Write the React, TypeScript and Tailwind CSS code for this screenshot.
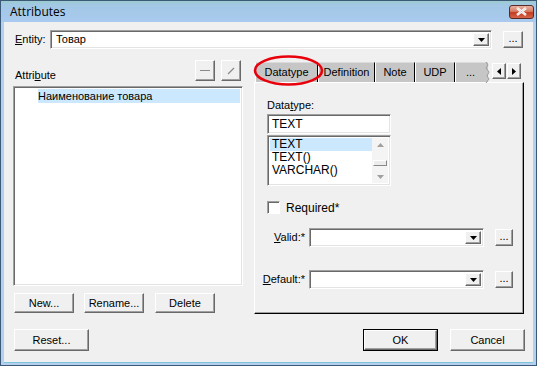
import type { ReactNode } from "react";

const raised =
  "bg-[#f0f0f0] border border-t-white border-l-white border-r-[#696969] border-b-[#696969] shadow-[inset_-1px_-1px_0_#a0a0a0]";
const sunken =
  "bg-white border border-t-[#a0a0a0] border-l-[#a0a0a0] border-r-white border-b-white shadow-[inset_1px_1px_0_#696969,inset_-1px_-1px_0_#e3e3e3]";

function Btn({ children, className = "", def = false }: { children?: ReactNode; className?: string; def?: boolean }) {
  if (def) {
    return (
      <div className={`border border-black ${className}`}>
        <div className={`${raised} w-full h-full flex items-center justify-center`}>{children}</div>
      </div>
    );
  }
  return <div className={`${raised} flex items-center justify-center ${className}`}>{children}</div>;
}

function DownArrow() {
  return (
    <svg width="7" height="4" viewBox="0 0 7 4">
      <path d="M0 0h7L3.5 4z" fill="#000" />
    </svg>
  );
}

function Combo({ className = "", text = "" }: { className?: string; text?: string }) {
  return (
    <div className={`${sunken} flex items-stretch p-[2px] ${className}`}>
      <div className="flex-1 flex items-center pl-[3px]">{text}</div>
      <div className={`${raised} w-[16px] flex items-center justify-center`}>
        <DownArrow />
      </div>
    </div>
  );
}

function Tab({ label, w }: { label: string; w: string }) {
  return (
    <div
      className={`${w} h-full bg-[#c6c6c6] border-l border-l-white border-r border-r-black border-t border-t-[#dcdcdc] flex items-center justify-center`}
    >
      {label}
    </div>
  );
}

export default function App() {
  return (
    <div className="relative w-[537px] h-[366px] border border-[#3c5a78] bg-[#b4d0ee] flex flex-col font-['Liberation_Sans',Arial,sans-serif] text-[11px] text-black overflow-hidden">
      {/* Title bar */}
      <div className="h-[21px] flex items-center justify-between bg-[linear-gradient(to_bottom,#9ccbcf_0px,#a2c8e6_4px,#a9caee_21px)] pl-[9px] pr-[2px]">
        <span className="text-[12px] font-['Open_Sans',Arial,sans-serif] text-black">Attributes</span>
        <div className="w-[25px] h-[14px] rounded-[3px] border border-[#5a2a24] bg-[linear-gradient(to_bottom,#e8b0a2,#d77a62_45%,#c23c22_55%,#d5644a)] flex items-center justify-center">
          <svg width="11" height="9" viewBox="0 0 11 9">
            <path d="M1 1l9 7M10 1L1 8" stroke="#fff" strokeWidth="2.4" />
            <path d="M1 1l9 7M10 1L1 8" stroke="#6a3a30" strokeWidth="0.5" strokeOpacity="0.4" fill="none" />
          </svg>
        </div>
      </div>

      {/* Body */}
      <div className="mx-[3px] h-[340px] bg-[#f0f0f0] flex flex-col pl-[9px]">
        {/* Entity row */}
        <div className="mt-[8px] h-[19px] flex items-center">
          <span className="w-[37px] pl-[2px]">
            <u>E</u>ntity:
          </span>
          <Combo className="w-[442px] h-[19px]" text="Товар" />
          <Btn className="ml-[11px] w-[20px] h-[17px] pb-[3px]">...</Btn>
        </div>

        {/* Main */}
        <div className="mt-[11px] flex h-[254px]">
          {/* Left column */}
          <div className="w-[230px] flex flex-col">
            <div className="h-[22px] flex items-end justify-between pr-[2px]">
              <span className="pl-[2px] leading-[14px]">
                Attri<u>b</u>ute
              </span>
              <div className="flex gap-[6px] self-start">
                <Btn className="w-[20px] h-[21px]">
                  <div className="w-[10px] h-px bg-[#8a8a8a]" />
                </Btn>
                <Btn className="w-[20px] h-[21px]">
                  <svg width="8" height="8" viewBox="0 0 8 8">
                    <path d="M1 7L7 1" stroke="#8a8a8a" strokeWidth="1.2" />
                  </svg>
                </Btn>
              </div>
            </div>
            <div className={`${sunken} mt-[4px] h-[200px] p-[2px]`}>
              <div className="ml-[22px] mt-0 h-[14px] bg-[#cce8ff] flex items-center">
                Наименование товара
              </div>
            </div>
            <div className="mt-[7px] flex">
              <Btn className="ml-[1px] w-[60px] h-[20px]">New...</Btn>
              <Btn className="ml-[10px] w-[60px] h-[20px]">Rename...</Btn>
              <Btn className="ml-[11px] w-[60px] h-[20px]">Delete</Btn>
            </div>
          </div>

          {/* Right column: tabs */}
          <div className="ml-[11px] w-[270px] flex flex-col">
            <div className="h-[22px] flex items-start">
              <div className="ml-[1px] mt-[2px] h-[20px] flex">
                <Tab label="Datatype" w="w-[63px]" />
                <Tab label="Definition" w="w-[57px]" />
                <Tab label="Note" w="w-[40px]" />
                <Tab label="UDP" w="w-[40px]" />
                <div className="relative w-[33px] h-full bg-[#c6c6c6] border-t border-t-[#dcdcdc] border-l border-l-white flex items-center justify-center pr-[3px]">
                  ...
                  <svg className="absolute right-[-3px] top-[-1px]" width="6" height="21" viewBox="0 0 6 21">
                    <path d="M1 0 L3 3 L1 6 L4 10 L2 14 L4 17 L1 21" stroke="#9a9a9a" fill="none" />
                  </svg>
                </div>
              </div>
              <div className="ml-[4px] mt-[3px] flex">
                <Btn className="w-[14px] h-[16px]">
                  <svg width="4" height="7" viewBox="0 0 4 7">
                    <path d="M4 0v7L0 3.5z" fill="#000" />
                  </svg>
                </Btn>
                <Btn className="ml-[1px] w-[14px] h-[16px]">
                  <svg width="4" height="7" viewBox="0 0 4 7">
                    <path d="M0 0v7l4-3.5z" fill="#000" />
                  </svg>
                </Btn>
              </div>
            </div>

            {/* Tab pane */}
            <div className="h-[232px] border border-t-white border-l-white border-r-black border-b-black shadow-[inset_-1px_-1px_0_#a0a0a0] flex flex-col pl-[12px]">
              <span className="mt-[15px] h-[14px] leading-[14px]">
                Data<u>t</u>ype:
              </span>
              <div className={`${sunken} mt-[2px] w-[124px] h-[20px] flex items-center pl-[4px] text-[12px]`}>
                TEXT
              </div>
              <div className={`${sunken} mt-[1px] w-[124px] h-[51px] p-[2px] flex`}>
                <div className="flex-1 flex flex-col text-[12px]">
                  <div className="bg-[#cce8ff] pl-[2px] h-[13px] leading-[13px]">TEXT</div>
                  <div className="pl-[2px] h-[13px] leading-[13px]">TEXT()</div>
                  <div className="pl-[2px] h-[13px] leading-[13px]">VARCHAR()</div>
                </div>
                <div className="w-[16px] flex flex-col items-center bg-[#f4f4f4]">
                  <div className="h-[14px] flex items-center justify-center">
                    <svg width="7" height="4" viewBox="0 0 7 4">
                      <path d="M0 4h7L3.5 0z" fill="#a0a0a0" />
                    </svg>
                  </div>
                  <div className="mt-[8px] w-[14px] h-[6px] bg-[#ececec] border border-t-white border-l-white border-r-[#888] border-b-[#888]" />
                  <div className="mt-[5px] h-[12px] flex items-center justify-center">
                    <svg width="7" height="4" viewBox="0 0 7 4">
                      <path d="M0 0h7L3.5 4z" fill="#a0a0a0" />
                    </svg>
                  </div>
                </div>
              </div>

              <div className="mt-[15px] h-[13px] flex items-center">
                <div className="w-[13px] h-[13px] bg-white border border-t-[#a0a0a0] border-l-[#a0a0a0] border-r-white border-b-white shadow-[inset_1px_1px_0_#696969]" />
                <span className="ml-[6px] text-[12px]">Required*</span>
              </div>

              <div className="mt-[14px] -ml-[12px] h-[19px] flex items-center">
                <span className="w-[54px] text-right pr-[4px]">
                  <u>V</u>alid:*
                </span>
                <Combo className="w-[175px] h-[19px]" />
                <Btn className="ml-[11px] w-[18px] h-[17px] pb-[3px]">...</Btn>
              </div>

              <div className="mt-[23px] -ml-[12px] h-[19px] flex items-center">
                <span className="w-[54px] text-right pr-[4px]">
                  <u>D</u>efault:*
                </span>
                <Combo className="w-[175px] h-[19px]" />
                <Btn className="ml-[11px] w-[18px] h-[17px] pb-[3px]">...</Btn>
              </div>
            </div>
          </div>
        </div>

        {/* Bottom buttons */}
        <div className="mt-[15px] h-[22px] flex items-center pr-[8px]">
          <Btn className="ml-[1px] w-[75px] h-[22px]">Reset...</Btn>
          <div className="flex-1" />
          <Btn def className="w-[75px] h-[22px]">
            OK
          </Btn>
          <Btn className="ml-[12px] w-[75px] h-[22px]">Cancel</Btn>
        </div>
      </div>
      <div className="mx-[3px] flex-1 border-t border-t-[#7cc6dc]" />

      {/* Red annotation ellipse */}
      <svg className="absolute left-[250px] top-[52px] pointer-events-none" width="76" height="36" viewBox="0 0 76 36">
        <ellipse cx="37.5" cy="17.5" rx="33.5" ry="14" fill="none" stroke="#e8000c" strokeWidth="2.6" />
      </svg>
    </div>
  );
}
